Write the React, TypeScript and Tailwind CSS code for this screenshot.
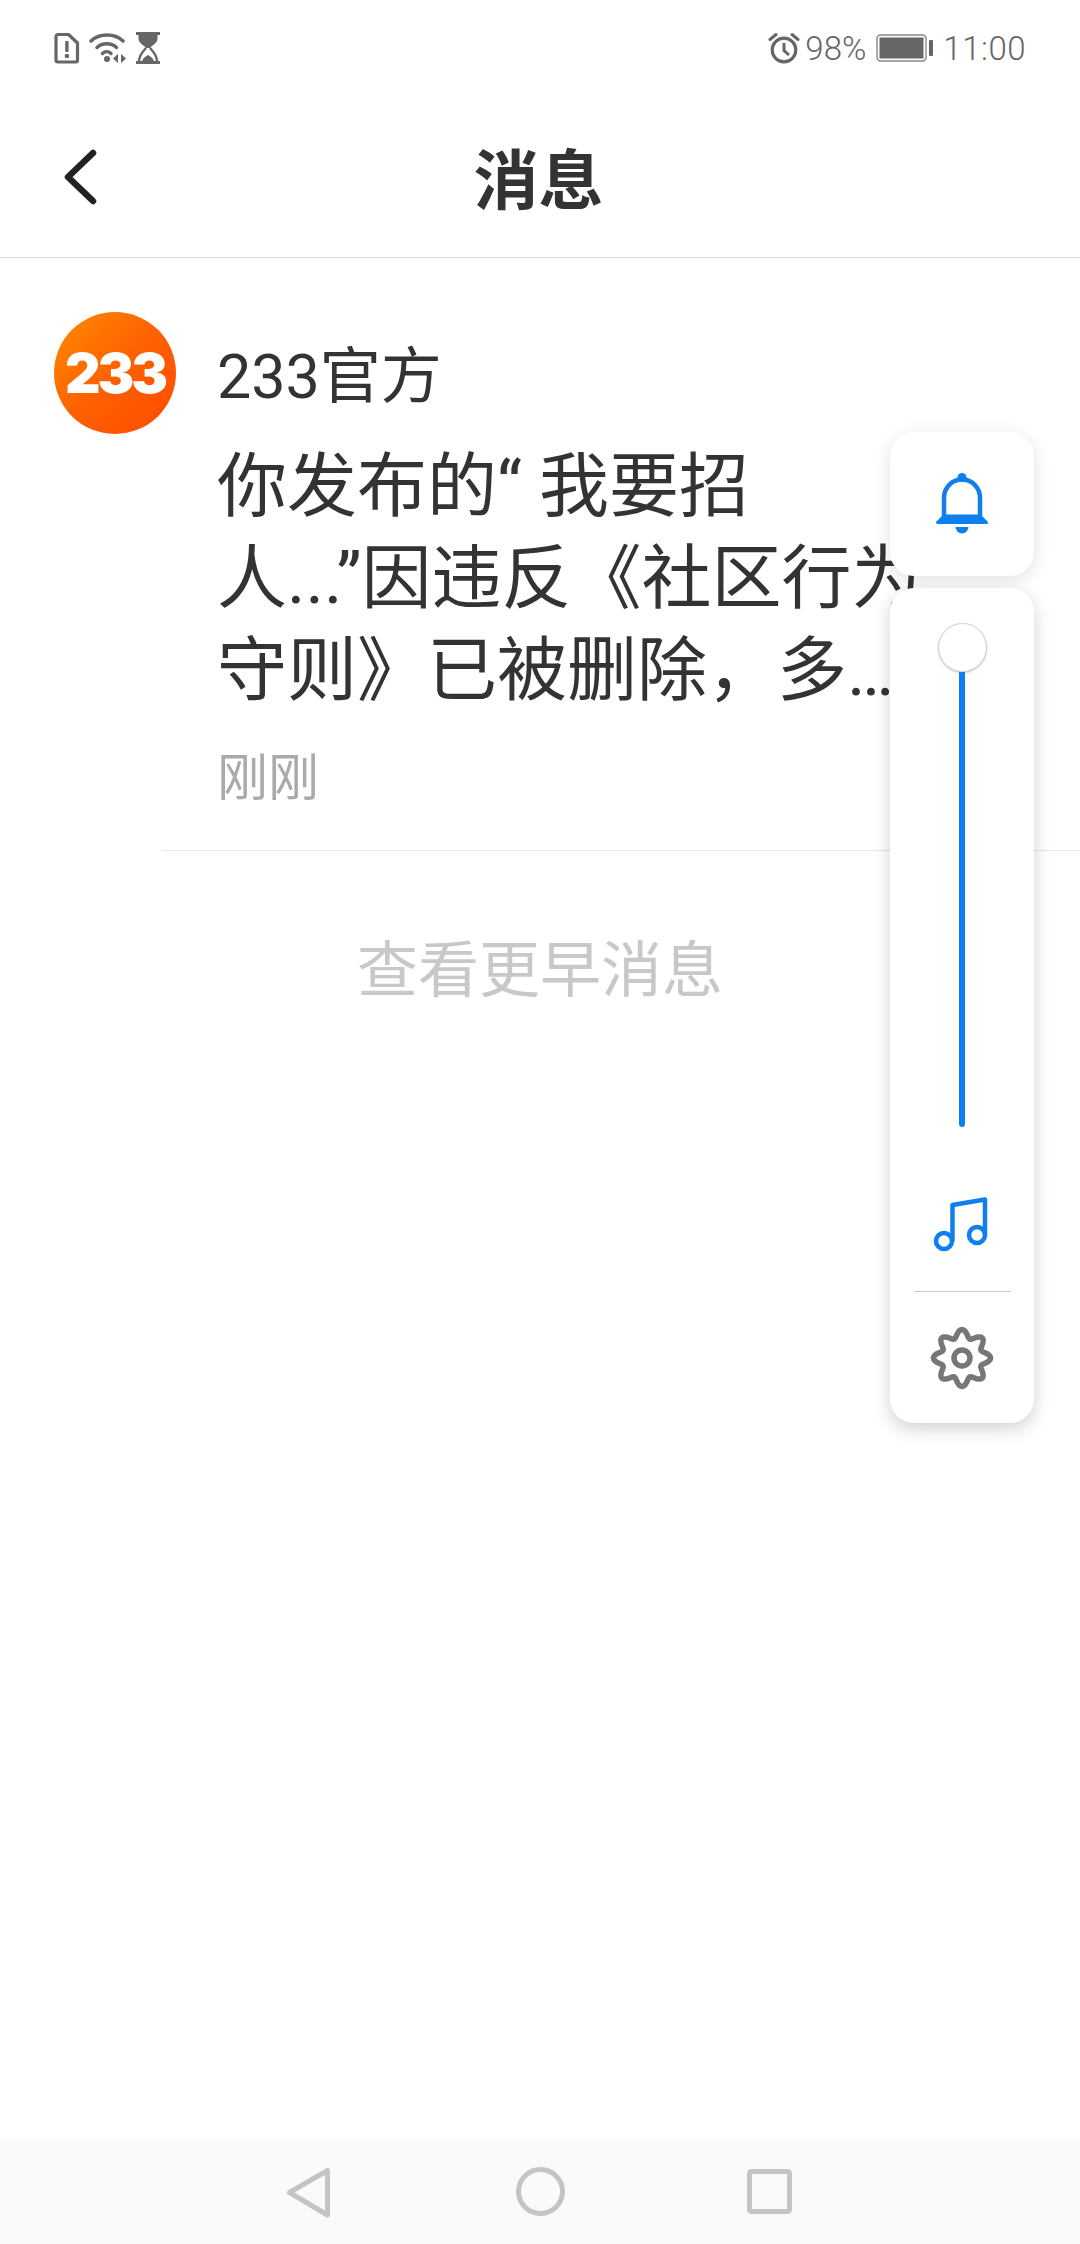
const cjk = "font-['Roboto','Noto_Sans_CJK_SC',sans-serif]";

// wavy 8 lobe outline for the settings gear
function gearPath(cx: number, cy: number) {
  const pts: string[] = [];
  for (let i = 0; i < 240; i++) {
    const a = (i / 240) * Math.PI * 2;
    const r = 24.5 + 4 * Math.cos(8 * a);
    pts.push(`${(cx + r * Math.cos(a)).toFixed(2)} ${(cy + r * Math.sin(a)).toFixed(2)}`);
  }
  return `M${pts.join("L")}Z`;
}

function StatusBar() {
  return (
    <div className="flex h-[96px] items-center justify-between pl-[54px] pr-[54px] text-[#666666]">
      <div className="flex items-center gap-[10px]">
        {/* sim alert */}
        <svg width="26" height="32" viewBox="0 0 26 32">
          <path d="M4 2.500h10.500L23.500 11v17a2 2 0 0 1-2 2H4a2 2 0 0 1-2-2V4.500a2 2 0 0 1 2-2z" fill="none" stroke="#666" strokeWidth="3.200" strokeLinejoin="round" />
          <rect x="11.200" y="9" width="3.400" height="11" rx="1" fill="#666" />
          <circle cx="12.900" cy="24" r="2.300" fill="#666" />
        </svg>
        {/* wifi */}
        <svg width="38" height="32" viewBox="0 0 38 32" className="-ml-[1px]">
          <path d="M2 9C10.500 1 25.500 1 34 9" fill="none" stroke="#666" strokeWidth="3.400" strokeLinecap="round" />
          <path d="M8 15.500C13.500 10.500 22 10.500 27.500 15.500" fill="none" stroke="#666" strokeWidth="3.400" strokeLinecap="round" />
          <path d="M13.500 21.500C16 19.200 19.500 19.200 22 21.500" fill="none" stroke="#666" strokeWidth="3.400" strokeLinecap="round" />
          <circle cx="18" cy="27" r="3" fill="#666" />
          <path d="M29 22v9l-5-4.500zM32 22v9l5-4.500z" fill="#666" />
        </svg>
        {/* hourglass */}
        <svg width="24" height="32" viewBox="0 0 24 32" className="-ml-[1px]">
          <path d="M0 1.500h24M0 30.500h24" stroke="#666" strokeWidth="3" />
          <path d="M2.500 3h19v4c0 4-5.500 6.500-7.500 9-2 0-2 0-4 0C8 13.500 2.500 11 2.500 7z" fill="#666" />
          <path d="M10 16C8 18.500 3.500 22 3 29M14 16c2 2.500 6.500 6 7 13" fill="none" stroke="#666" strokeWidth="2.400" />
          <path d="M6 29c1-3 4-5 6-6 2 1 5 3 6 6z" fill="#666" />
        </svg>
      </div>
      <div className="flex items-center font-['Roboto',sans-serif] text-[33px] font-light">
        <svg width="32" height="32" viewBox="0 0 32 32">
          <circle cx="16" cy="18" r="11.800" fill="none" stroke="#666" strokeWidth="3.200" />
          <path d="M16 11v7.500l5 4.500" fill="none" stroke="#666" strokeWidth="3" />
          <path d="M2 7.500 8 2.500M30 7.500 24 2.500" stroke="#666" strokeWidth="3" strokeLinecap="round" />
        </svg>
        <span className="ml-[5px] pt-[2px]">98%</span>
        <svg width="58" height="28" viewBox="0 0 58 28" className="ml-[10px]">
          <rect x="1" y="1" width="49" height="26" rx="3.500" fill="none" stroke="#888" strokeWidth="1.400" />
          <rect x="3.500" y="3.500" width="44" height="21" fill="#666" />
          <rect x="53" y="6" width="4" height="16" rx="1" fill="#666" />
        </svg>
        <span className="ml-[9px] pt-[2px] tracking-[0.5px]">11:00</span>
      </div>
    </div>
  );
}

function NavBar() {
  return (
    <div className="mt-auto h-[105px] bg-[#fafafa]">
      <svg width="1080" height="105" viewBox="0 0 1080 105">
        <path d="M327.500 31.500v44.500L289.500 53.500z" fill="none" stroke="#c4c4c4" strokeWidth="5" strokeLinejoin="round" />
        <circle cx="540.500" cy="52.500" r="22" fill="none" stroke="#c4c4c4" strokeWidth="5" />
        <rect x="749.500" y="32.500" width="40" height="40" rx="2" fill="none" stroke="#c4c4c4" strokeWidth="5" />
      </svg>
    </div>
  );
}

function VolumePanel() {
  return (
    <div className="absolute left-[890px] top-[432px] flex w-[144px] flex-col gap-[12px]">
      <div className="flex h-[144px] items-center justify-center rounded-[24px] bg-white shadow-[0_4px_18px_rgba(0,0,0,0.12)]">
        <svg width="54" height="62" viewBox="0 0 54 62">
          <circle cx="27" cy="4.500" r="4.500" fill="#0f7ff0" />
          <path d="M9 47V25C9 14.500 17 6.500 27 6.500S45 14.500 45 25v22" fill="none" stroke="#0f7ff0" strokeWidth="4.500" />
          <path d="M2.500 49.500H51.500L45 43H9z" fill="#0f7ff0" stroke="#0f7ff0" strokeWidth="3" strokeLinejoin="round" />
          <path d="M20.500 54h13a6.500 6.500 0 0 1-13 0z" fill="#0f7ff0" />
        </svg>
      </div>
      <div className="flex h-[835px] flex-col items-center rounded-[24px] bg-white shadow-[0_6px_18px_rgba(0,0,0,0.18)]">
        <div className="mt-[35px] h-[49px] w-[49px] rounded-full border border-[#d0d0d0] bg-white shadow-[0_1px_2px_rgba(0,0,0,0.2)]" />
        <div className="h-[455px] w-[6px] rounded-b-full bg-[#0f7ff0]" />
        <svg width="58" height="56" viewBox="0 0 58 56" className="mt-[70px]">
          <circle cx="11" cy="44" r="8" fill="none" stroke="#0f7ff0" strokeWidth="4.500" />
          <circle cx="44" cy="38" r="8" fill="none" stroke="#0f7ff0" strokeWidth="4.500" />
          <path d="M19.500 44V8L52 2.500V38" fill="none" stroke="#0f7ff0" strokeWidth="4.500" strokeLinejoin="round" />
        </svg>
        <div className="mt-[38px] h-px w-[97px] bg-[#cccccc]" />
        <svg width="64" height="64" viewBox="0 0 64 64" className="mt-[34px]">
          <path d={gearPath(32, 32)} fill="none" stroke="#777777" strokeWidth="5.500" />
          <circle cx="32" cy="32" r="8" fill="none" stroke="#777777" strokeWidth="5.500" />
        </svg>
      </div>
    </div>
  );
}

export default function App() {
  return (
    <div className={`relative flex h-[2244px] w-[1080px] flex-col overflow-hidden bg-white ${cjk}`}>
      <StatusBar />
      {/* header */}
      <div className="relative flex h-[162px] items-center justify-center border-b border-[#dddddd] pr-[3px] pt-[12px]">
        <svg width="36" height="60" viewBox="0 0 36 60" className="absolute left-[62px] top-[51px]">
          <path d="M31 6 6 30l25 24" fill="none" stroke="#222" strokeWidth="6.500" strokeLinecap="round" strokeLinejoin="round" />
        </svg>
        <h1 className="text-[65px] font-bold leading-none text-[#333333]">消息</h1>
      </div>
      {/* message */}
      <div className="flex pl-[54px] pt-[54px]">
        <div className="flex h-[122px] w-[122px] shrink-0 items-center justify-center rounded-full bg-gradient-to-br from-[#ff8a00] via-[#ff6000] to-[#ff4a00]">
          <span className="font-['Inter',sans-serif] text-[55px] font-black leading-none tracking-[-3px] text-white">233</span>
        </div>
        <div className="ml-[41px] flex-1">
          <div className="pt-[29px] text-[61px] leading-[72px] text-[#333333]">233官方</div>
          <div className="mt-[28px] whitespace-nowrap text-[70px] leading-[92px] text-[#333333]">
            <div>你发布的“ 我要招</div>
            <div>人...”因违反《社区行为</div>
            <div>守则》已被删除，多…</div>
          </div>
          <div className="mt-[30px] text-[51px] leading-[64px] text-[#aaaaaa]">刚刚</div>
        </div>
      </div>
      <div className="ml-[162px] mt-[39px] h-px bg-[#e5e5e5]" />
      <div className="pt-[80px] text-center text-[61px] leading-[80px] text-[#c8c8c8]">查看更早消息</div>
      <NavBar />
      <VolumePanel />
    </div>
  );
}
